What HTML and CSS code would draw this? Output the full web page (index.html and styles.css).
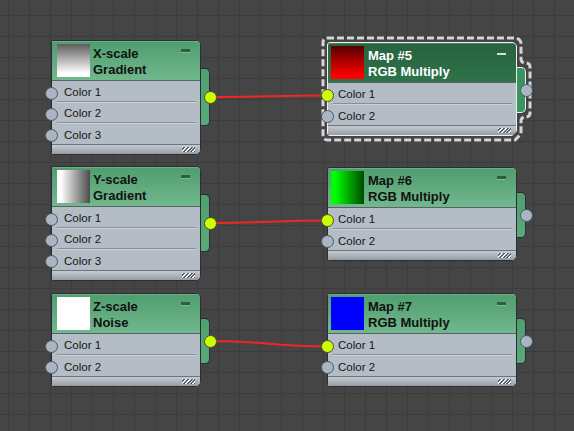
FILE: index.html
```html
<!DOCTYPE html>
<html>
<head>
<meta charset="utf-8">
<link rel="stylesheet" href="styles.css">
</head>
<body>
<div class="canvas">
  <svg class="wires" width="574" height="431" viewBox="0 0 574 431">
    <path d="M210.5 97 C263 97 275 95.5 327.5 95.5"/>
    <path d="M210.5 223 C263 223 275 220.5 327.5 220.5"/>
    <path d="M210.5 341 C263 341 275 346.5 327.5 346.5"/>
  </svg>

  <div class="node lft tall n1">
    <div class="tab"><span class="port on"></span></div>
    <div class="head">
      <div class="thumb th-x"></div>
      <div class="title">X-scale<br>Gradient</div>
      <span class="min"></span>
    </div>
    <div class="rows">
      <div class="row"><span class="port"></span>Color 1</div>
      <div class="row"><span class="port"></span>Color 2</div>
      <div class="row"><span class="port"></span>Color 3</div>
    </div>
    <div class="foot"><span class="grip"></span></div>
  </div>

  <div class="node lft tall n3">
    <div class="tab"><span class="port on"></span></div>
    <div class="head">
      <div class="thumb th-y"></div>
      <div class="title">Y-scale<br>Gradient</div>
      <span class="min"></span>
    </div>
    <div class="rows">
      <div class="row"><span class="port"></span>Color 1</div>
      <div class="row"><span class="port"></span>Color 2</div>
      <div class="row"><span class="port"></span>Color 3</div>
    </div>
    <div class="foot"><span class="grip"></span></div>
  </div>

  <div class="node lft short n5">
    <div class="tab"><span class="port on"></span></div>
    <div class="head">
      <div class="thumb th-z"></div>
      <div class="title">Z-scale<br>Noise</div>
      <span class="min"></span>
    </div>
    <div class="rows">
      <div class="row"><span class="port"></span>Color 1</div>
      <div class="row"><span class="port"></span>Color 2</div>
    </div>
    <div class="foot"><span class="grip"></span></div>
  </div>

  <svg class="selection" width="574" height="431" viewBox="0 0 574 431">
    <path d="M327 38 H515 A6 6 0 0 1 521 44 V59 A4 4 0 0 0 525 63 H526 A4 4 0 0 1 530 67 V113 A4 4 0 0 1 526 117 H525 A4 4 0 0 0 521 121 V134 L515 140 H327 A4 4 0 0 1 323 136 V42 A4 4 0 0 1 327 38 Z"/>
  </svg>

  <div class="node rgt short sel n2">
    <div class="tab"><span class="port"></span></div>
    <div class="head">
      <div class="thumb th-red"></div>
      <div class="title">Map #5<br>RGB Multiply</div>
      <span class="min"></span>
    </div>
    <div class="rows">
      <div class="row"><span class="port on"></span>Color 1</div>
      <div class="row"><span class="port"></span>Color 2</div>
    </div>
    <div class="foot"><span class="grip"></span></div>
  </div>

  <div class="node rgt short n4">
    <div class="tab"><span class="port"></span></div>
    <div class="head">
      <div class="thumb th-green"></div>
      <div class="title">Map #6<br>RGB Multiply</div>
      <span class="min"></span>
    </div>
    <div class="rows">
      <div class="row"><span class="port on"></span>Color 1</div>
      <div class="row"><span class="port"></span>Color 2</div>
    </div>
    <div class="foot"><span class="grip"></span></div>
  </div>

  <div class="node rgt short n6">
    <div class="tab"><span class="port"></span></div>
    <div class="head">
      <div class="thumb th-blue"></div>
      <div class="title">Map #7<br>RGB Multiply</div>
      <span class="min"></span>
    </div>
    <div class="rows">
      <div class="row"><span class="port on"></span>Color 1</div>
      <div class="row"><span class="port"></span>Color 2</div>
    </div>
    <div class="foot"><span class="grip"></span></div>
  </div>
</div>
</body>
</html>
```

FILE: styles.css
```css
html, body {
  margin: 0;
  padding: 0;
  background: #454545;
}

.canvas {
  position: relative;
  width: 574px;
  height: 431px;
  overflow: hidden;
  background-color: #454545;
  background-image:
    linear-gradient(to right, #3c3c3c 1px, transparent 1px),
    linear-gradient(to bottom, #3c3c3c 1px, transparent 1px);
  background-size: 21px 21px;
  background-position: 8px 15px;
  font-family: "Liberation Sans", Arial, sans-serif;
}

.wires, .selection {
  position: absolute;
  left: 0;
  top: 0;
}

.wires path {
  fill: none;
  stroke: #f42525;
  stroke-width: 2;
}

.selection path {
  fill: none;
  stroke: #d4d4d4;
  stroke-width: 3;
  stroke-dasharray: 7 3;
}

/* node */
.node {
  position: absolute;
  box-sizing: border-box;
  display: flex;
  flex-direction: column;
  border: 1px solid #2a2d31;
  border-radius: 3px 5px 3px 3px;
  background: #b4bcc5;
  clip-path: polygon(-20px -20px, calc(100% + 20px) -20px, calc(100% + 20px) calc(100% - 18px), 100% calc(100% - 5px), calc(100% - 5px) 100%, -20px calc(100% + 20px));
}

.lft { left: 51px; width: 150px; }
.rgt { left: 327px; width: 190px; }

.n1 { top: 40px; }
.n3 { top: 166px; }
.n5 { top: 293px; }
.n2 { top: 42px; }
.n4 { top: 167px; }
.n6 { top: 293px; }

.head {
  height: 40px;
  box-sizing: border-box;
  display: flex;
  align-items: flex-start;
  padding: 3px 0 0 5px;
  background: linear-gradient(#4f9d6e, #71b88d);
  border-bottom: 1px solid #59616a;
  border-radius: 2px 4px 0 0;
  box-shadow: inset 0 1px 0 rgba(255, 255, 255, 0.18);
}

.rgt .head { padding-left: 3px; }

.thumb {
  width: 33px;
  height: 33px;
  flex: none;
}

.th-x { background: linear-gradient(#5c5c5c, #ffffff 88%); }
.th-y { background: linear-gradient(to right, #ffffff 12%, #4b4b4b); }
.th-z { background: #ffffff; }
.th-red { background: linear-gradient(#560000, #ff0000 90%); }
.th-green { background: linear-gradient(to right, #00ff00 12%, #004a00); }
.th-blue { background: #0000ff; }

.title {
  margin-left: 3px;
  padding-top: 2px;
  font-size: 13px;
  line-height: 16px;
  font-weight: bold;
  color: #111111;
  white-space: nowrap;
}

.rgt .title { margin-left: 4px; }

.min {
  flex: none;
  width: 9px;
  height: 3px;
  margin: 5px 10px 0 auto;
  background: #2c5f40;
  box-shadow: 0 1px 0 rgba(255, 255, 255, 0.25);
}

.rows {
  display: flex;
  flex-direction: column;
}

.row {
  position: relative;
  height: 21px;
  box-sizing: border-box;
  margin: 0 4px 0 5px;
  padding: 2px 0 0 7px;
  display: flex;
  align-items: center;
  font-size: 11.5px;
  color: #151515;
  border-bottom: 1px solid #878f97;
  box-shadow: 0 1px 0 #ccd2d8;
}

.rgt .row { padding-left: 5px; }

.row:last-child {
  border-bottom: none;
  box-shadow: none;
}

.foot {
  height: 10px;
  box-sizing: border-box;
  border-top: 1px solid #6c747c;
  background: linear-gradient(#c4cbd1, #959ca3);
  display: flex;
  justify-content: flex-end;
  align-items: flex-end;
}

.grip {
  width: 13px;
  height: 5px;
  margin: 0 5px 2px 0;
  background: repeating-linear-gradient(135deg, #eef2f5 0 1.2px, #59606a 1.2px 2.6px);
}

/* output tab */
.tab {
  position: absolute;
  left: calc(100% + 1px);
  width: 9px;
  box-sizing: border-box;
  border: 1px solid #2a2d31;
  border-left: none;
  border-radius: 0 5px 5px 0;
  background: linear-gradient(#4f9f6f, #5aa97a);
}

.tall .tab { top: 27px; height: 58px; }
.short .tab { top: 24px; height: 46px; }

/* ports */
.port {
  position: absolute;
  width: 13px;
  height: 13px;
  box-sizing: border-box;
  border-radius: 50%;
  border: 1px solid #4d5560;
  background: #a9b5c3;
}

.port.on {
  background: #ccff00;
  border-color: #4a5030;
}

.tab .port {
  left: 3px;
  top: calc(50% - 6.5px);
}

.row .port {
  left: -12px;
  top: 6px;
}

/* selected node */
.sel {
  border-color: #f0f0f0;
}

.sel .head {
  background: linear-gradient(#27623e, #2f724a);
  border-bottom-color: #5a6168;
}

.sel .title { color: #ffffff; }

.sel .min {
  height: 2px;
  margin-top: 7px;
  background: #cfe3d5;
  box-shadow: none;
}

.sel .tab {
  border-color: #f0f0f0;
  background: #3a9460;
}
```
